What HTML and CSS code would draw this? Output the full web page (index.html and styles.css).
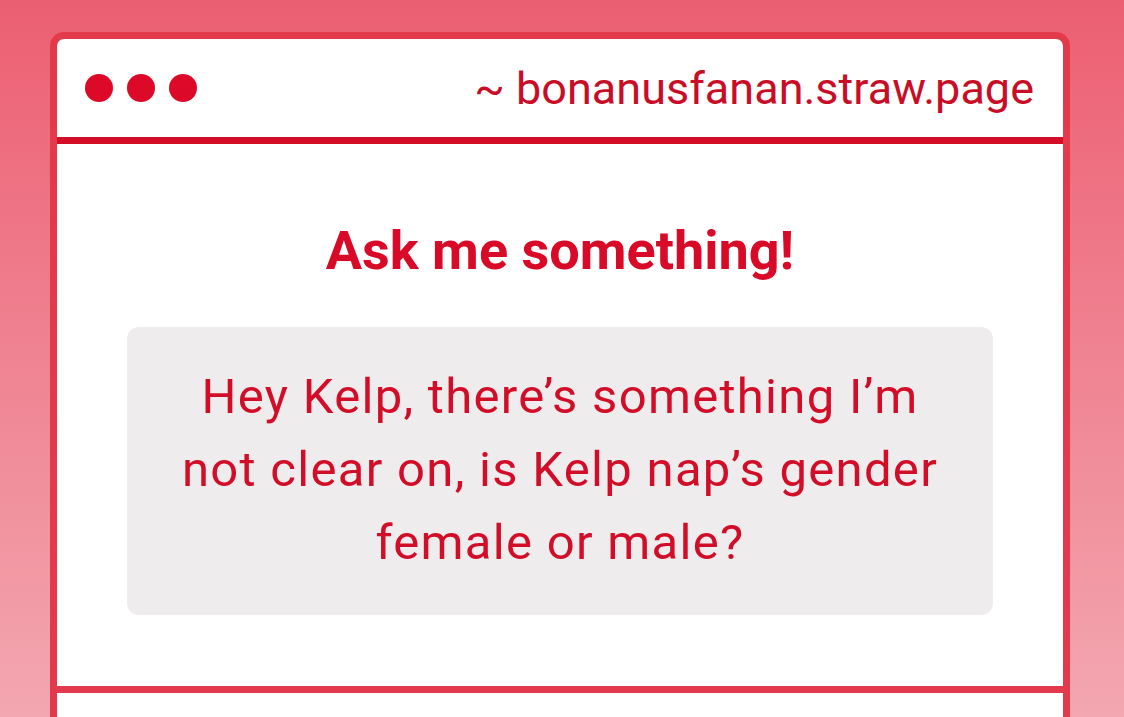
FILE: index.html
```html
<!DOCTYPE html>
<html lang="en">
<head>
<meta charset="utf-8">
<link rel="stylesheet" href="styles.css">
</head>
<body>
<div class="window">
  <div class="titlebar">
    <div class="dots"><span class="dot"></span><span class="dot"></span><span class="dot"></span></div>
    <div class="url">~ bonanusfanan.straw.page</div>
  </div>
  <div class="content">
    <h1 class="title">Ask me something!</h1>
    <div class="question">Hey Kelp, there’s something I’m not clear on, is Kelp nap’s gender female or male?</div>
  </div>
  <div class="next"></div>
</div>
</body>
</html>
```
FILE: styles.css
```css
html, body {
  margin: 0;
  padding: 0;
  height: 100%;
  overflow: hidden;
}
body {
  background: linear-gradient(180deg, #ec5f72 0%, #f3a7b1 100%);
  font-family: Roboto, "Noto Sans", sans-serif;
  color: #d40a27;
}
.window {
  margin: 32px 0 0 50px;
  width: 1006px;
  border: 7px solid #e23a4a;
  border-bottom: none;
  border-radius: 14px 14px 0 0;
  background: #fff;
}
.titlebar {
  height: 98px;
  border-bottom: 7px solid #d30d26;
  display: flex;
  align-items: center;
  justify-content: space-between;
  padding: 0 29px 0 28px;
}
.dots {
  display: flex;
  gap: 14px;
}
.dot {
  width: 28px;
  height: 28px;
  border-radius: 50%;
  background: #dc0a28;
}
.url {
  font-size: 45px;
  color: #c90d26;
}
.content {
  height: 549px;
  border-bottom: 7px solid #e23a4a;
  padding: 0 70px;
  box-sizing: border-box;
  display: flex;
  flex-direction: column;
  align-items: stretch;
}
.title {
  margin: 75px 0 0;
  font-size: 54px;
  line-height: 64px;
  font-weight: 700;
  text-align: center;
  color: #d80a28;
}
.question {
  margin-top: 44px;
  background: #eeeced;
  border-radius: 12px;
  padding: 33px 40px 36px;
  font-size: 49px;
  line-height: 73px;
  letter-spacing: 1.3px;
  text-align: center;
  color: #d20d28;
}
.next {
  height: 40px;
  background: #fff;
}
```
